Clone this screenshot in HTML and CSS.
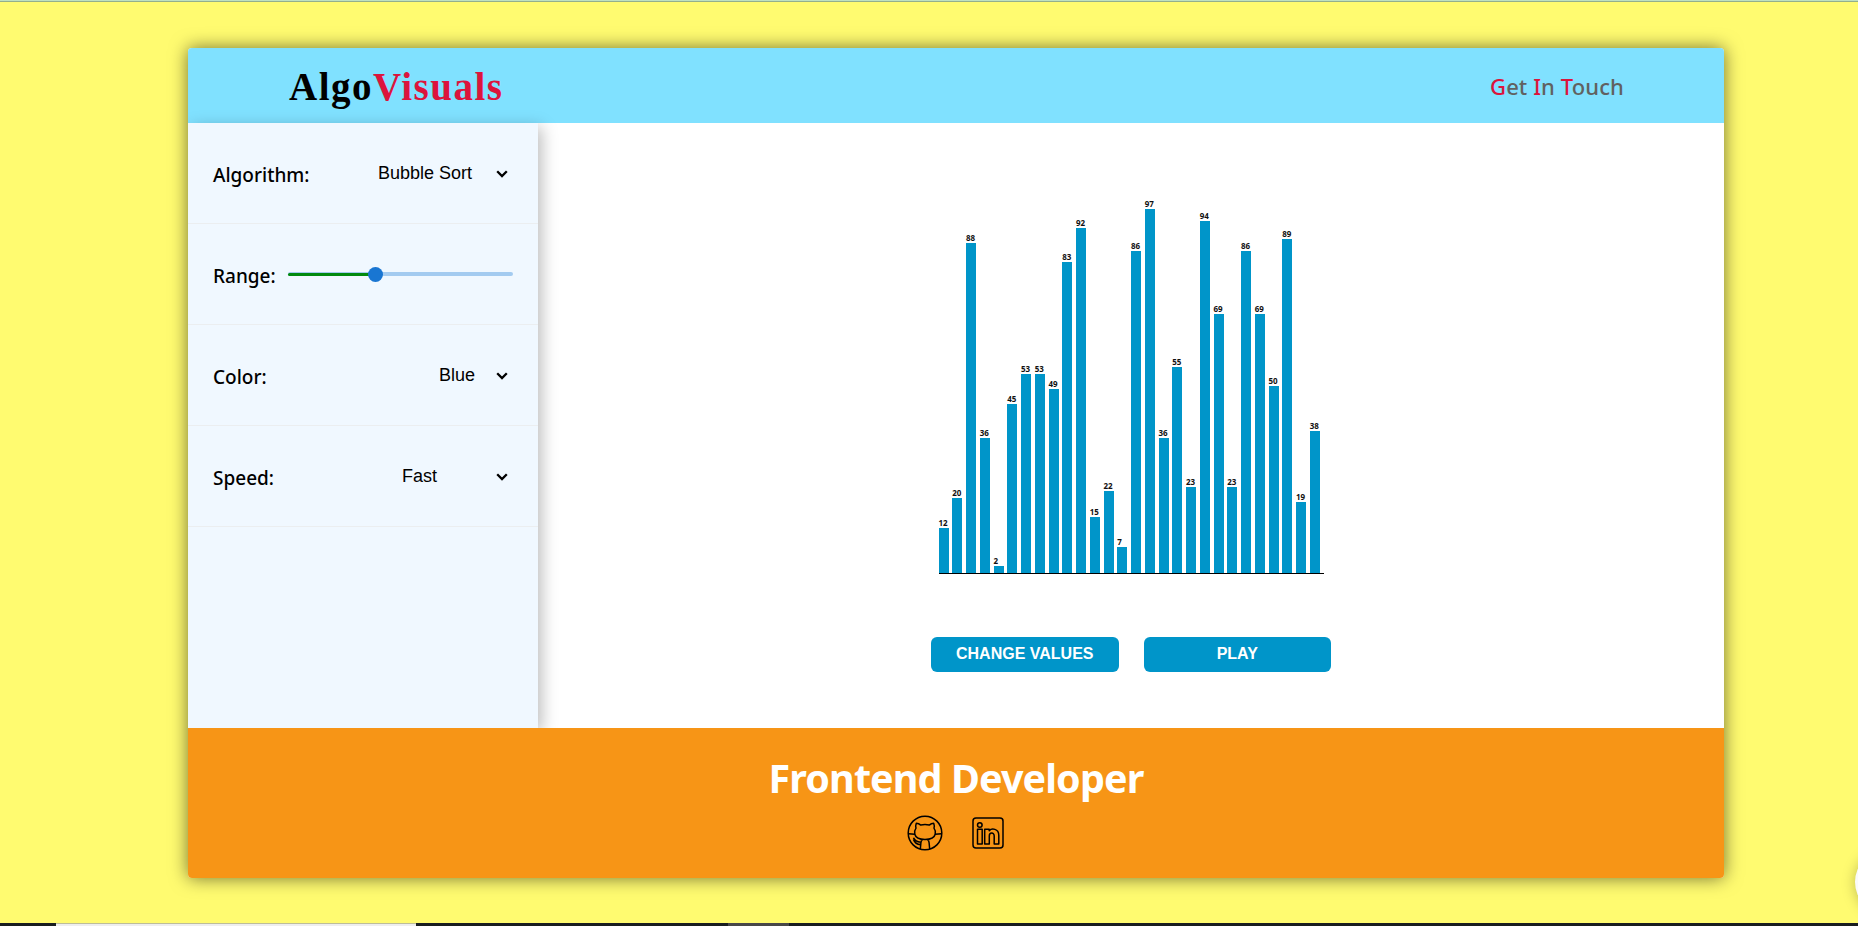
FILE: index.html
```html
<!DOCTYPE html>
<html lang="en">
<head>
<meta charset="utf-8">
<title>AlgoVisuals</title>
<link rel="stylesheet" href="styles.css">
</head>
<body>
<div class="topline"></div>
<main class="stage">
  <div class="card">
    <header class="header">
      <h1 class="brand">Algo<span class="accent">Visuals</span></h1>
      <a class="contact"><span class="accent">G</span>et <span class="accent">I</span>n <span class="accent">T</span>ouch</a>
    </header>
    <div class="content">
      <aside class="sidebar">
        <div class="row"><span class="label">Algorithm:</span><span class="select select-algorithm">Bubble Sort</span><svg class="chevron" viewBox="0 0 12 8"><path d="M1.2 1.2 6 6 10.8 1.2"/></svg></div>
        <div class="row"><span class="label">Range:</span><div class="slider"><div class="fill"></div><div class="thumb"></div></div></div>
        <div class="row"><span class="label">Color:</span><span class="select select-color">Blue</span><svg class="chevron" viewBox="0 0 12 8"><path d="M1.2 1.2 6 6 10.8 1.2"/></svg></div>
        <div class="row"><span class="label">Speed:</span><span class="select select-speed">Fast</span><svg class="chevron" viewBox="0 0 12 8"><path d="M1.2 1.2 6 6 10.8 1.2"/></svg></div>
      </aside>
      <section class="visual">
        <div class="chart" id="chart"></div>
        <div class="buttons"><button class="button">CHANGE VALUES</button><button class="button">PLAY</button></div>
      </section>
    </div>
    <footer class="footer">
      <h2 class="role">Frontend Developer</h2>
      <div class="social">
        <svg class="github" viewBox="0 0 36 36"><circle cx="18" cy="18" r="16.8"/><path d="M9.300 8.200c1.800 0 3.300.8 4.500 1.900 2.600-.6 5.800-.6 8.400 0 1.200-1.100 2.700-1.900 4.500-1.900.8 2 .7 3.500.3 4.900 1.400 1.900 1.700 4.200 1.200 6.200-.9 3.700-4.400 5.200-10.200 5.200s-9.300-1.500-10.200-5.200c-.5-2-.2-4.300 1.200-6.200-.4-1.400-.5-2.900.3-4.900zM13.300 34.200l.6-6.400c0-1.500.8-2.600 1.800-3.200M22.700 34.200l-.6-6.400c0-1.500-.8-2.600-1.800-3.200M1.500 18.800l6.300.5M34.500 18.800l-6.300.5"/><path class="tail" d="M6.500 22.800c1 2.500 3.500 4.200 7.300 4.400M6.500 24.500c1.300 3.500 3.700 5 7 5.100"/></svg>
        <svg class="linkedin" viewBox="0 0 32 32"><rect x="1" y="1" width="30" height="30" rx="3"/><circle cx="7.800" cy="8" r="2.300"/><path d="M5.500 12.300h4.700v14.800H5.500zM12.700 12.300h4.500v1.500c2.300-2.700 9.600-2.600 9.600 4.700v8.600h-4.600v-8.200c0-4-4.900-3.900-4.900 0v8.200h-4.600z"/></svg>
      </div>
    </footer>
  </div>
</main>
<div class="floating"></div>
<div class="taskbar"><div class="task-light"></div><div class="task-gray"></div></div>
<script src="chart.js"></script>
</body>
</html>
```
FILE: styles.css
```css
* { box-sizing: border-box; }
body { margin: 0; width: 1858px; height: 926px; overflow: hidden; display: flex; flex-direction: column; background: #fffb70; font-family: "Noto Sans", sans-serif; }
.topline { height: 2px; background: #bfe0c0; border-bottom: 1px solid #93af8c; }
.stage { flex: 1; display: flex; justify-content: center; align-items: flex-start; padding: 46px 0 0 54px; }
.card { width: 1536px; height: 830px; display: flex; flex-direction: column; border-radius: 4px; background: #fff; box-shadow: 0 0 18px rgba(0,0,0,.55); overflow: hidden; }
.header { height: 75px; flex: none; background: #80e1ff; display: flex; align-items: center; justify-content: space-between; padding: 0 100px 0 101px; }
.brand { margin: 2px 0 0; font: 700 39px/48px "Liberation Serif", serif; letter-spacing: 1.5px; color: #000; }
.accent { color: #dc143c; }
.contact { margin-top: 1px; font-size: 22px; font-weight: 500; color: #616161; letter-spacing: .1px; }
.content { height: 605px; flex: none; display: flex; }
.sidebar { width: 350px; background: #f0f8ff; box-shadow: 4px 4px 15px rgba(0,0,0,.26); }
.row { height: 101px; border-bottom: 1px solid #ebeef0; display: flex; align-items: center; padding: 0 30px 0 25px; }
.label { font-size: 19px; font-weight: 500; margin-top: 3px; white-space: nowrap; color: #000; }
.select { font: 18px "Liberation Sans", sans-serif; margin-left: auto; white-space: nowrap; }
.select-algorithm { margin-right: 24px; }
.select-color { margin-right: 21px; }
.select-speed { margin-right: 59px; }
.chevron { width: 12px; height: 8px; margin-top: 2px; fill: none; stroke: #000; stroke-width: 2.3; }
.slider { width: 225px; height: 4px; border-radius: 2px; background: #a3cbf0; margin-left: auto; margin-right: -5px; display: flex; align-items: center; }
.fill { width: 88px; height: 3px; border-radius: 2px; background: #028a0f; }
.thumb { width: 15px; height: 15px; border-radius: 50%; background: #1976d2; margin-left: -8px; }
.visual { flex: 1; display: flex; flex-direction: column; align-items: center; padding-top: 71px; }
.chart { width: 385px; height: 380px; border-bottom: 1px solid #000; display: flex; align-items: flex-end; }
.item { width: 13.75px; flex: none; }
.value { font-size: 8px; line-height: 10px; font-weight: 700; color: #111; }
.bar { width: 10px; background: #0095c9; }
.buttons { display: flex; gap: 25px; margin-top: 63px; }
.button { width: 187.5px; height: 35px; border: 0; border-radius: 6px; padding: 0 0 2px; background: #0095c9; color: #fff; font: 700 16px "Liberation Sans", sans-serif; }
.footer { height: 150px; flex: none; background: #f79516; display: flex; flex-direction: column; align-items: center; }
.role { margin: 21px 0 0; font-size: 39.5px; line-height: 58px; font-weight: 700; color: #fff; letter-spacing: -.9px; }
.social { display: flex; gap: 29px; align-items: center; margin: 8px 1px 0 0; }
.github, .linkedin { fill: none; stroke: #000; stroke-width: 1.5; stroke-linejoin: round; }
.tail { stroke-width: 1.6; }
.github { width: 36px; height: 36px; }
.linkedin { width: 32px; height: 32px; }
.taskbar { height: 3px; flex: none; display: flex; background: #191e20; }
.task-light { width: 360px; margin-left: 56px; background: #eee; border-top: 1px solid #bdbd98; }
.task-gray { width: 61px; margin-left: 312px; background: #484848; }
.floating { position: absolute; left: 1855px; top: 850px; width: 64px; height: 64px; border-radius: 50%; background: #fafafa; box-shadow: 0 1px 14px rgba(0,0,0,.25); }
```
FILE: chart.js
```javascript
const values = [12, 20, 88, 36, 2, 45, 53, 53, 49, 83, 92, 15, 22, 7, 86, 97, 36, 55, 23, 94, 69, 23, 86, 69, 50, 89, 19, 38];
const chart = document.getElementById('chart');
values.forEach((value) => {
  const item = document.createElement('div');
  item.className = 'item';
  const label = document.createElement('div');
  label.className = 'value';
  label.textContent = value;
  const bar = document.createElement('div');
  bar.className = 'bar';
  bar.style.height = `${value * 3.75}px`;
  item.append(label, bar);
  chart.append(item);
});
```
